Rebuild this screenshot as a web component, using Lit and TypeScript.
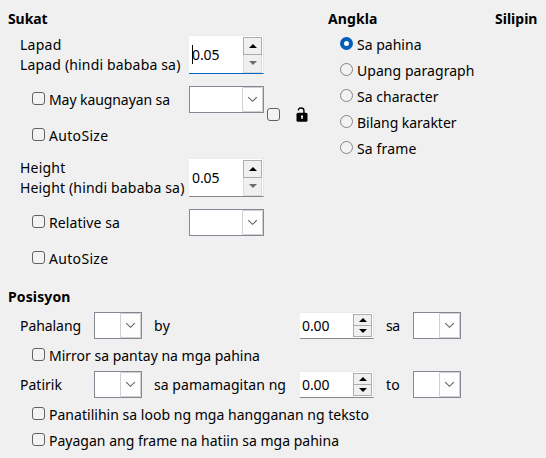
import { LitElement, html, css, svg } from "lit";
import { customElement, property } from "lit/decorators.js";

/** A single line of text, tracked so that it fills a given width. */
@customElement("ui-text")
class UiText extends LitElement {
  static styles = css`
    :host { display: block; white-space: pre; line-height: 20px; height: 20px; }
    .run { display: inline-block; }
  `;
  @property() text = "";
  @property({ type: Number }) w = 0;
  render() {
    return html`<span class="run">${this.text}</span>`;
  }
  updated() {
    const run = this.renderRoot.querySelector(".run") as HTMLElement;
    run.style.letterSpacing = "0px";
    const gap = (this.w - run.getBoundingClientRect().width) / this.text.length;
    run.style.letterSpacing = `${gap.toFixed(3)}px`;
  }
}

@customElement("ui-option")
class UiOption extends LitElement {
  static styles = css`
    :host { display: flex; height: 20px; gap: 4px; }
    .mark {
      box-sizing: border-box; flex: none; width: 13px; height: 13px; margin-top: 2px;
      border: 1px solid #626262; border-radius: 3px; background: #f3f3f3;
    }
    .radio { border-radius: 50%; border-color: #858585; }
    .on { border: 4px solid #005fb8; background: #fff; }
  `;
  @property() text = "";
  @property({ type: Number }) w = 0;
  @property({ type: Boolean }) radio = false;
  @property({ type: Boolean }) checked = false;
  render() {
    return html`<span class="mark ${this.radio ? "radio" : ""} ${this.checked ? "on" : ""}"></span>
      ${this.text ? html`<ui-text .text=${this.text} .w=${this.w}></ui-text>` : ""}`;
  }
}

@customElement("ui-combo")
class UiCombo extends LitElement {
  static styles = css`
    :host {
      box-sizing: border-box; display: flex; justify-content: flex-end; height: 27px; width: 48px;
      border: 1px solid #858892; background: #fff;
    }
    :host([wide]) { width: 75px; }
    .drop {
      box-sizing: border-box; width: 21px; border: 1px solid #d0d0d0; border-radius: 1px;
      background: #fdfdfd; display: flex; align-items: center; justify-content: center;
    }
    svg { display: block; }
  `;
  render() {
    return html`<span class="drop"><svg width="11" height="7" viewBox="0 0 11 7">
      <path d="M1.2 1.2 5.5 5.3 9.8 1.2" fill="none" stroke="#606060" stroke-width="1.1" /></svg></span>`;
  }
}

@customElement("ui-spin")
class UiSpin extends LitElement {
  static styles = css`
    :host {
      box-sizing: border-box; display: flex; align-items: center; justify-content: space-between;
      width: 74px; height: 27px; background: #fff; border-bottom: 1px solid #868686;
      border-right: 1px solid #e6e6e6; border-top: 1px solid #ebebeb;
      padding-left: 2px;
    }
    :host([tall]) { height: 39px; width: 75px; padding-left: 3px; }
    :host([focused]) { border-bottom-color: #0067c0; }
    .value { display: flex; align-items: center; }
    .caret { width: 1px; height: 19px; background: #000; margin-right: -1px; }
    .buttons { display: flex; flex-direction: column; width: 19px; height: 23px; margin-right: 1px; }
    :host([tall]) .buttons { height: 36px; }
    .btn {
      box-sizing: border-box; flex: 1; border: 1px solid #adadad; background: #f0f0f0;
      display: flex; align-items: center; justify-content: center;
    }
    .btn + .btn { border-top-width: 0; }
    :host([tall]) .btn + .btn { border: 1px solid #d9d9d9; border-top: 0; color: #6d6d6d; }
    svg { display: block; fill: currentColor; }
  `;
  @property() value = "";
  @property({ type: Boolean }) focused = false;
  render() {
    return html`
      <span class="value">${this.focused ? html`<span class="caret"></span>` : ""}
        <ui-text .text=${this.value} .w=${27.5}></ui-text></span>
      <span class="buttons">
        <span class="btn"><svg width="8" height="4"><path d="M0 4 4 0 8 4z" /></svg></span>
        <span class="btn"><svg width="8" height="4"><path d="M0 0 4 4 8 0z" /></svg></span>
      </span>`;
  }
}

const lock = svg`
  <path d="M2.400 3.600C2.400 1.600 3.300 1 5 1c1.900 0 2.900.8 2.900 2.600V6.500" fill="none" stroke="#000" stroke-width="1.400" />
  <rect x="0.500" y="5.800" width="11" height="9" rx="1.500" />
  <path d="M5 8.500h2v1.500h-.3V12H5.300V10H5z" fill="#fff" />`;

@customElement("app-root")
class AppRoot extends LitElement {
  static styles = css`
    :host {
      display: block; box-sizing: border-box; width: 546px; height: 458px; overflow: hidden;
      background: #f0f0f0; color: #000; padding: 9px 0 0 8px;
      font: 14px/20px "Noto Sans", "Open Sans", sans-serif;
    }
    .title { font-weight: 700; }
    .top { display: grid; grid-template-columns: 320px 167px 1fr; height: 278px; }
    .size { display: flex; }
    .fields { width: 256px; }
    .group {
      display: grid; grid-template-columns: 169px 75px; grid-template-rows: 39px 27px 20px;
      row-gap: 12px; height: 117px; margin: 6px 0 0 12px;
    }
    .opt { margin: 4px 0 0 12px; }
    .auto { margin: 1px 0 0 12px; }
    .keep { display: flex; align-items: flex-start; gap: 16px; margin: 97px 0 0 3px; }
    .lock { display: block; margin-top: 1px; }
    .radios { display: flex; flex-direction: column; gap: 6px; margin: 6px 0 0 12px; }
    .row {
      display: grid; grid-template-columns: 74px 60px 146px 86px 27px 48px; height: 27px;
      margin: 5px 0 0 12px; align-items: start;
    }
    .row ui-text { margin-top: 4px; }
    .check { margin: 7px 0 0 24px; }
    .close { margin-top: 6px; }
  `;
  private text(t: string, w: number, cls = "") {
    return html`<ui-text class=${cls} .text=${t} .w=${w}></ui-text>`;
  }
  private group(name: string, w1: number, w2: number, rel: string, w3: number, focused: boolean) {
    return html`<div class="group">
      <div>${this.text(name, w1)}${this.text(`${name} (hindi bababa sa)`, w2)}</div>
      <ui-spin tall ?focused=${focused} .value=${"0.05"}></ui-spin>
      <ui-option class="opt" .text=${rel} .w=${w3}></ui-option>
      <ui-combo wide></ui-combo>
      <ui-option class="auto" .text=${"AutoSize"} .w=${59.5}></ui-option>
    </div>`;
  }
  private row(name: string, w1: number, by: string, w2: number, to: string) {
    return html`<div class="row">
      ${this.text(name, w1)}<ui-combo></ui-combo>${this.text(by, w2)}
      <ui-spin .value=${"0.00"}></ui-spin>${this.text(to, 13.7)}<ui-combo></ui-combo>
    </div>`;
  }
  render() {
    const anchors: [string, number][] = [
      ["Sa pahina", 64.5], ["Upang paragraph", 117.5], ["Sa character", 81.5],
      ["Bilang karakter", 99.5], ["Sa frame", 59.5],
    ];
    return html`
      <section class="top">
        <div class="size">
          <div class="fields">
            ${this.text("Sukat", 39.5, "title")}
            ${this.group("Lapad", 41.5, 160.5, "May kaugnayan sa", 121, true)}
            ${this.group("Height", 45.5, 164.5, "Relative sa", 71, false)}
          </div>
          <div class="keep"><ui-option></ui-option>
            <svg class="lock" width="12" height="15" viewBox="0 0 12 15">${lock}</svg></div>
        </div>
        <div>
          ${this.text("Angkla", 49.5, "title")}
          <div class="radios">${anchors.map(([t, w], i) => html`
            <ui-option radio ?checked=${i === 0} .text=${t} .w=${w}></ui-option>`)}</div>
        </div>
        ${this.text("Silipin", 42.5, "title")}
      </section>
      <section>
        ${this.text("Posisyon", 62.5, "title")}
        ${this.row("Pahalang", 61, "by", 16.5, "sa")}
        <ui-option class="check" .text=${"Mirror sa pantay na mga pahina"} .w=${211}></ui-option>
        ${this.row("Patirik", 42, "sa pamamagitan ng", 132, "to")}
        <ui-option class="check" .text=${"Panatilihin sa loob ng mga hangganan ng teksto"} .w=${320}></ui-option>
        <ui-option class="check close" .text=${"Payagan ang frame na hatiin sa mga pahina"} .w=${290}></ui-option>
      </section>`;
  }
}
